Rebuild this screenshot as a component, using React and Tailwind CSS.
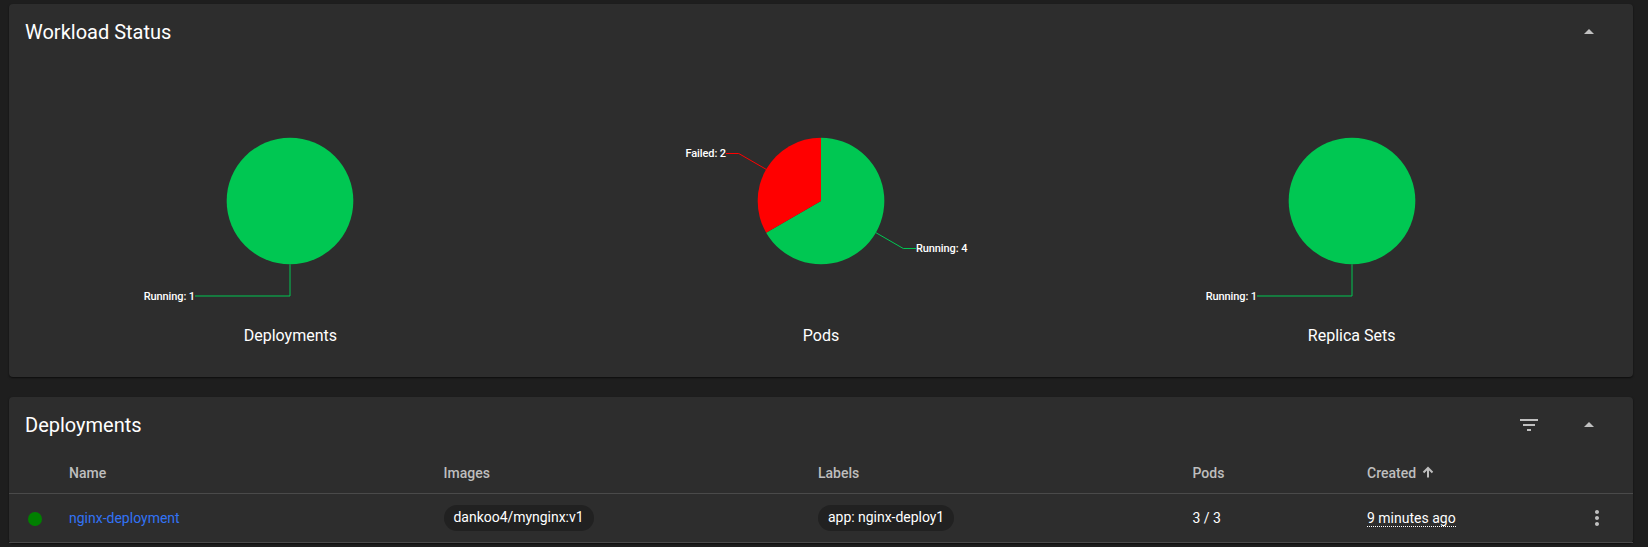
const CX = 265;
const CY = 131;
const R = 63.33;

function point(angle, radius) {
  const a = (angle * Math.PI) / 180;
  return [CX + Math.sin(a) * radius, CY - Math.cos(a) * radius];
}

function Slice({ start, end, color }) {
  if (end - start >= 360) return <circle cx={CX} cy={CY} r={R} fill={color} />;
  const [x1, y1] = point(start, R);
  const [x2, y2] = point(end, R);
  const large = end - start > 180 ? 1 : 0;
  return <path d={`M${CX} ${CY}L${x1} ${y1}A${R} ${R} 0 ${large} 1 ${x2} ${y2}Z`} fill={color} />;
}

function SliceLabel({ start, end, color, label }) {
  const mid = (start + end) / 2;
  const left = mid >= 180;
  const [x1, y1] = point(mid, R);
  const [x2, y2] = point(mid, R * 1.5);
  const x3 = CX + (left ? -1 : 1) * R * 1.5;
  return (
    <g>
      <polyline points={`${x1},${y1} ${x2},${y2} ${x3},${y2}`} fill="none" stroke={color} strokeWidth="1" />
      <text
        x={x3}
        y={y2}
        dy=".35em"
        textAnchor={left ? "end" : "start"}
        className="fill-white text-[11px] font-medium tracking-[-0.1px]"
      >
        {label}
      </text>
    </g>
  );
}

function Chart({ title, slices }) {
  return (
    <div className="flex flex-1 flex-col items-center">
      <svg width="530" height="245" className="block">
        {slices.map((s) => (
          <Slice key={s.label} {...s} />
        ))}
        {slices.map((s) => (
          <SliceLabel key={s.label} {...s} />
        ))}
      </svg>
      <div className="mt-[9px] text-base font-normal leading-6 text-white">{title}</div>
    </div>
  );
}

const GREEN = "#00c752";
const RED = "#ff0000";

const charts = [
  { title: "Deployments", slices: [{ start: 0, end: 360, color: GREEN, label: "Running: 1" }] },
  {
    title: "Pods",
    slices: [
      { start: 0, end: 240, color: GREEN, label: "Running: 4" },
      { start: 240, end: 360, color: RED, label: "Failed: 2" },
    ],
  },
  { title: "Replica Sets", slices: [{ start: 0, end: 360, color: GREEN, label: "Running: 1" }] },
];

function Icon({ d, size = 24, className = "" }) {
  return (
    <svg width={size} height={size} viewBox="0 0 24 24" className={`fill-[#c0c0c0] ${className}`}>
      <path d={d} />
    </svg>
  );
}

const ARROW_UP = "M7 14l5-5 5 5z";
const FILTER = "M10 18h4v-2h-4v2zM3 6v2h18V6H3zm3 7h12v-2H6v2z";
const MORE =
  "M12 8c1.1 0 2-.9 2-2s-.9-2-2-2-2 .9-2 2 .9 2 2 2zm0 2c-1.1 0-2 .9-2 2s.9 2 2 2 2-.9 2-2-.9-2-2-2zm0 6c-1.1 0-2 .9-2 2s.9 2 2 2 2-.9 2-2-.9-2-2-2z";

function Card({ title, filter, className = "", children }) {
  return (
    <section className={`rounded bg-[#2d2d2d] shadow-[0_1px_2px_rgba(0,0,0,0.6)] ${className}`}>
      <header className="flex h-14 items-center justify-between pl-4 pr-8">
        <h2 className="text-xl font-normal">{title}</h2>
        <div className="flex items-center gap-9">
          {filter && <Icon d={FILTER} />}
          <Icon d={ARROW_UP} />
        </div>
      </header>
      {children}
    </section>
  );
}

function Chip({ children }) {
  return (
    <span className="flex h-[26px] items-center rounded-full bg-[#212121] px-2.5 pb-0.5 tracking-[-0.03px]">
      {children}
    </span>
  );
}

const ROW = "grid grid-cols-[60px_374.500px_374.500px_374.500px_174.500px_1fr] items-center border-b border-[#4a4a4a]";

export default function App() {
  return (
    <main className="h-[547px] overflow-hidden bg-[#1e1e1e] pl-[9px] pr-[15px] pt-1 font-[Roboto,sans-serif] text-sm text-white">
      <Card title="Workload Status" className="h-[373px]">
        <div className="flex px-4 pt-2.5">
          {charts.map((c) => (
            <Chart key={c.title} {...c} />
          ))}
        </div>
      </Card>
      <Card title="Deployments" filter className="mt-5 h-[146px]">
        <div className={`h-[41px] font-medium text-[#bebebe] ${ROW}`}>
          <span />
          <span>Name</span>
          <span>Images</span>
          <span>Labels</span>
          <span>Pods</span>
          <span className="flex items-center">
            Created
            <svg width="12" height="12" viewBox="0 0 12 12" className="-mt-0.5 ml-1.5 fill-none stroke-[#bebebe] stroke-2">
              <path d="M6 11.5V2M1.5 6.5L6 2l4.500 4.500" />
            </svg>
          </span>
        </div>
        <div className={`h-[49px] ${ROW}`}>
          <span className="ml-[19px] mt-0.5 size-3.5 rounded-full bg-[#008000]" />
          <a className="text-[#3273f5]">nginx-deployment</a>
          <span className="flex">
            <Chip>dankoo4/mynginx:v1</Chip>
          </span>
          <span className="flex">
            <Chip>app: nginx-deploy1</Chip>
          </span>
          <span>3 / 3</span>
          <span className="flex items-center justify-between pr-6">
            <span className="border-b border-dotted border-white leading-4">9 minutes ago</span>
            <Icon d={MORE} />
          </span>
        </div>
      </Card>
    </main>
  );
}
